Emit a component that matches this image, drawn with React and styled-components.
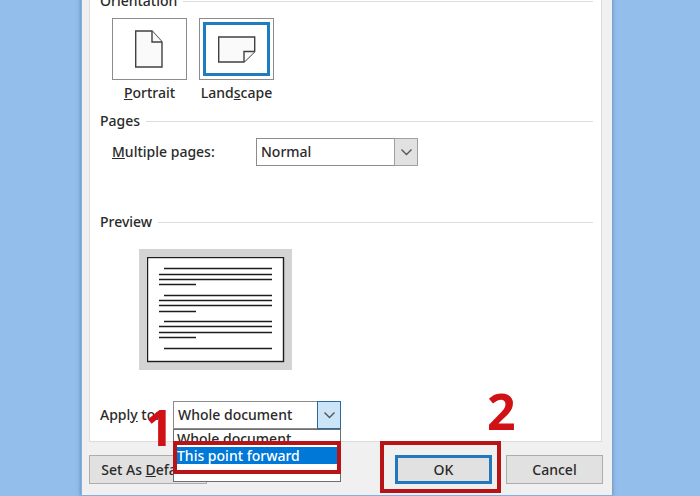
import React, { useState } from 'react';
import styled, { createGlobalStyle } from 'styled-components';

const GlobalStyle = createGlobalStyle`
  * {
    box-sizing: border-box;
  }

  body {
    margin: 0;
    background: #93bdea;
    color: #2a2a2a;
    font-family: 'Noto Sans', 'Open Sans', sans-serif;
    font-size: 14px;
    font-weight: 500;
    line-height: 18px;
  }

  button, select {
    color: inherit;
    font: inherit;
  }
`;

const Page = styled.main`
  min-height: 100vh;
  padding: 0 88px 0 81px;
  overflow: hidden;
`;

const Dialog = styled.div`
  background: #f0f0f0;
  border: solid #7fb2e2;
  border-width: 0 0 1px 1px;
  box-shadow: 0 0 4px rgba(60, 80, 110, 0.6);
  padding: 0 9px 11px 7px;
`;

const Panel = styled.section`
  background: #ffffff;
  border: solid #dcdcdc;
  border-width: 0 1px 1px;
  padding: 0 8px 12px 10px;
  margin-right: 1px;
`;

const Heading = styled.h2`
  display: flex;
  align-items: center;
  gap: 6px;
  margin: 0;
  font-size: 14px;
  font-weight: 500;

  &::after {
    content: '';
    flex: 1;
    height: 1px;
    background: #dcdcdc;
  }
`;

const OrientationGroup = styled.div`
  margin-top: -8px;
`;

const Choices = styled.div`
  display: flex;
  gap: 12px;
  padding: 8px 12px 10px;
`;

const Choice = styled.button`
  display: flex;
  flex-direction: column;
  align-items: center;
  gap: 4px;
  width: 75px;
  padding: 0;
  border: none;
  background: none;
  white-space: nowrap;
`;

const ChoiceFrame = styled.span`
  display: grid;
  width: 100%;
  height: 62px;
  padding: 3px;
  border: 1px solid #8c8c8c;
`;

const ChoiceInner = styled.span`
  display: grid;
  place-items: center;
  border: 3px solid ${props => props.$selected ? '#1f7cbf' : 'transparent'};
`;

const PagesRow = styled.div`
  display: flex;
  align-items: center;
  padding: 8px 12px 47px;

  label {
    width: 144px;
  }
`;

const SelectBox = styled.div`
  position: relative;
  display: grid;
  grid-template-columns: 1fr 24px;
  align-items: center;
  width: ${props => props.$wide ? '168px' : '162px'};
  height: 28px;

  select {
    grid-area: 1 / 1 / 2 / 3;
    width: 100%;
    height: 100%;
    padding: 0 24px 0 4px;
    border: 1px solid #8c8c8c;
    border-radius: 0;
    outline: none;
    appearance: none;
    background: #ffffff;
  }
`;

const Arrow = styled.span`
  grid-area: 1 / 2;
  display: grid;
  place-items: center;
  height: 100%;
  border: 1px solid ${props => props.$active ? '#2b6a9e' : '#a0a0a0'};
  background: ${props => props.$active ? '#cce4f7' : '#e1e1e1'};
  pointer-events: none;
`;

const PreviewFrame = styled.div`
  width: 153px;
  margin: 18px 0 31px 39px;
  padding: 8px 8px 7px;
  background: #d4d4d4;

  svg {
    display: block;
  }
`;

const ApplyRow = styled.div`
  position: relative;
  display: flex;
  align-items: center;

  label {
    width: 73px;
  }
`;

const OptionList = styled.div`
  position: absolute;
  z-index: 1;
  top: 28px;
  left: 0;
  right: 0;
  height: 53px;
  border: 1px solid #6e6e6e;
  background: #ffffff;
`;

const Option = styled.button`
  display: block;
  width: 100%;
  height: 17px;
  padding: 0 3px;
  border: none;
  background: ${props => props.$active ? '#0078d7' : 'transparent'};
  color: ${props => props.$active ? '#ffffff' : 'inherit'};
  line-height: 17px;
  text-align: left;
  white-space: nowrap;
`;

const ListMark = styled.span`
  position: absolute;
  top: 11px;
  left: -1px;
  right: -1px;
  height: 33px;
  border: 4px solid #b81418;
  pointer-events: none;
`;

const StepNumber = styled.span`
  position: absolute;
  z-index: 2;
  top: ${props => props.$top};
  left: ${props => props.$left};
  color: #d01216;
  font-family: 'Open Sans', 'Noto Sans', sans-serif;
  font-size: 50px;
  font-weight: 700;
  line-height: 50px;
  pointer-events: none;
`;

const Footer = styled.footer`
  display: flex;
  gap: 14px;
  padding-top: 13px;
`;

const FooterButton = styled.button`
  width: ${props => props.$wide ? '118px' : '97px'};
  height: 29px;
  padding: 0;
  border: ${props => props.$primary ? '3px solid #2377bd' : '1px solid #adadad'};
  background: #e1e1e1;
`;

const OkArea = styled.div`
  position: relative;
  margin-left: auto;
`;

const OkMark = styled.span`
  position: absolute;
  inset: -14px -9px -9px -15px;
  border: 4px solid #b81418;
  pointer-events: none;
`;

const Chevron = () => (
  <svg width="13" height="8" viewBox="0 0 13 8" fill="none" stroke="#555" strokeWidth="1.4">
    <path d="M1.5 1.5l5 5 5-5" />
  </svg>
);

const PortraitIcon = () => (
  <svg width="29" height="38" viewBox="0 0 29 38" fill="#fafafa" stroke="#404040" strokeWidth="1.4">
    <path d="M0.7 1h16.3l10 11v25H0.7z" />
    <path d="M17 1v11h10" />
  </svg>
);

const LandscapeIcon = () => (
  <svg width="38" height="27" viewBox="0 0 38 27" fill="#fafafa" stroke="#404040" strokeWidth="1.4">
    <path d="M0.7 1h36v14.5L26 26H0.7z" />
    <path d="M26 26V15.5h10.7" />
  </svg>
);

// [y, left, right] for every text line on the sample page
const previewLines = [
  [11, 17, 125], [17, 12, 125], [22, 12, 125], [27, 12, 49],
  [38, 17, 125], [43, 12, 125], [48, 12, 125], [54, 12, 49],
  [64, 17, 125], [69, 12, 125], [75, 12, 125], [80, 12, 49],
  [91, 17, 125],
];

const PagePreview = () => (
  <svg width="138" height="106" viewBox="0 0 138 106" role="img" aria-label="Preview">
    <rect x="0.5" y="0.5" width="136" height="104" fill="#fff" stroke="#1c1c1c" strokeWidth="1.4" />
    {previewLines.map(([y, left, right]) => (
      <path key={y} d={`M${left} ${y + 0.5}H${right}`} stroke="#1c1c1c" strokeWidth="1.3" />
    ))}
  </svg>
);

const App = () => {
  const [orientation, setOrientation] = useState('landscape');
  const [pages, setPages] = useState('Normal');
  const [applyTo, setApplyTo] = useState('Whole document');

  return (
    <Page>
      <GlobalStyle />
      <Dialog role="dialog" aria-label="Page Setup">
        <Panel>
          <OrientationGroup>
            <Heading>Orientation</Heading>
            <Choices>
              <Choice type="button" onClick={() => setOrientation('portrait')}>
                <ChoiceFrame>
                  <ChoiceInner $selected={orientation === 'portrait'}><PortraitIcon /></ChoiceInner>
                </ChoiceFrame>
                <span><u>P</u>ortrait</span>
              </Choice>
              <Choice type="button" onClick={() => setOrientation('landscape')}>
                <ChoiceFrame>
                  <ChoiceInner $selected={orientation === 'landscape'}><LandscapeIcon /></ChoiceInner>
                </ChoiceFrame>
                <span>Land<u>s</u>cape</span>
              </Choice>
            </Choices>
          </OrientationGroup>

          <Heading>Pages</Heading>
          <PagesRow>
            <label htmlFor="pages"><u>M</u>ultiple pages:</label>
            <SelectBox>
              <select id="pages" value={pages} onChange={e => setPages(e.target.value)}>
                <option>Normal</option>
              </select>
              <Arrow><Chevron /></Arrow>
            </SelectBox>
          </PagesRow>

          <Heading>Preview</Heading>
          <PreviewFrame><PagePreview /></PreviewFrame>

          <ApplyRow>
            <label htmlFor="apply">Appl<u>y</u> to:</label>
            <StepNumber $top="1px" $left="45px">1</StepNumber>
            <SelectBox $wide>
              <select id="apply" value={applyTo} onChange={e => setApplyTo(e.target.value)}>
                <option>Whole document</option>
                <option>This point forward</option>
              </select>
              <Arrow $active><Chevron /></Arrow>
              <OptionList>
                <Option type="button" onClick={() => setApplyTo('Whole document')}>Whole document</Option>
                <Option type="button" $active onClick={() => setApplyTo('This point forward')}>
                  This point forward
                </Option>
                <ListMark />
              </OptionList>
            </SelectBox>
          </ApplyRow>
        </Panel>

        <Footer>
          <FooterButton type="button" $wide>Set As <u>D</u>efault</FooterButton>
          <OkArea>
            <FooterButton type="button" $primary>OK</FooterButton>
            <OkMark />
            <StepNumber $top="-69px" $left="92px">2</StepNumber>
          </OkArea>
          <FooterButton type="button">Cancel</FooterButton>
        </Footer>
      </Dialog>
    </Page>
  );
};

export default App;
